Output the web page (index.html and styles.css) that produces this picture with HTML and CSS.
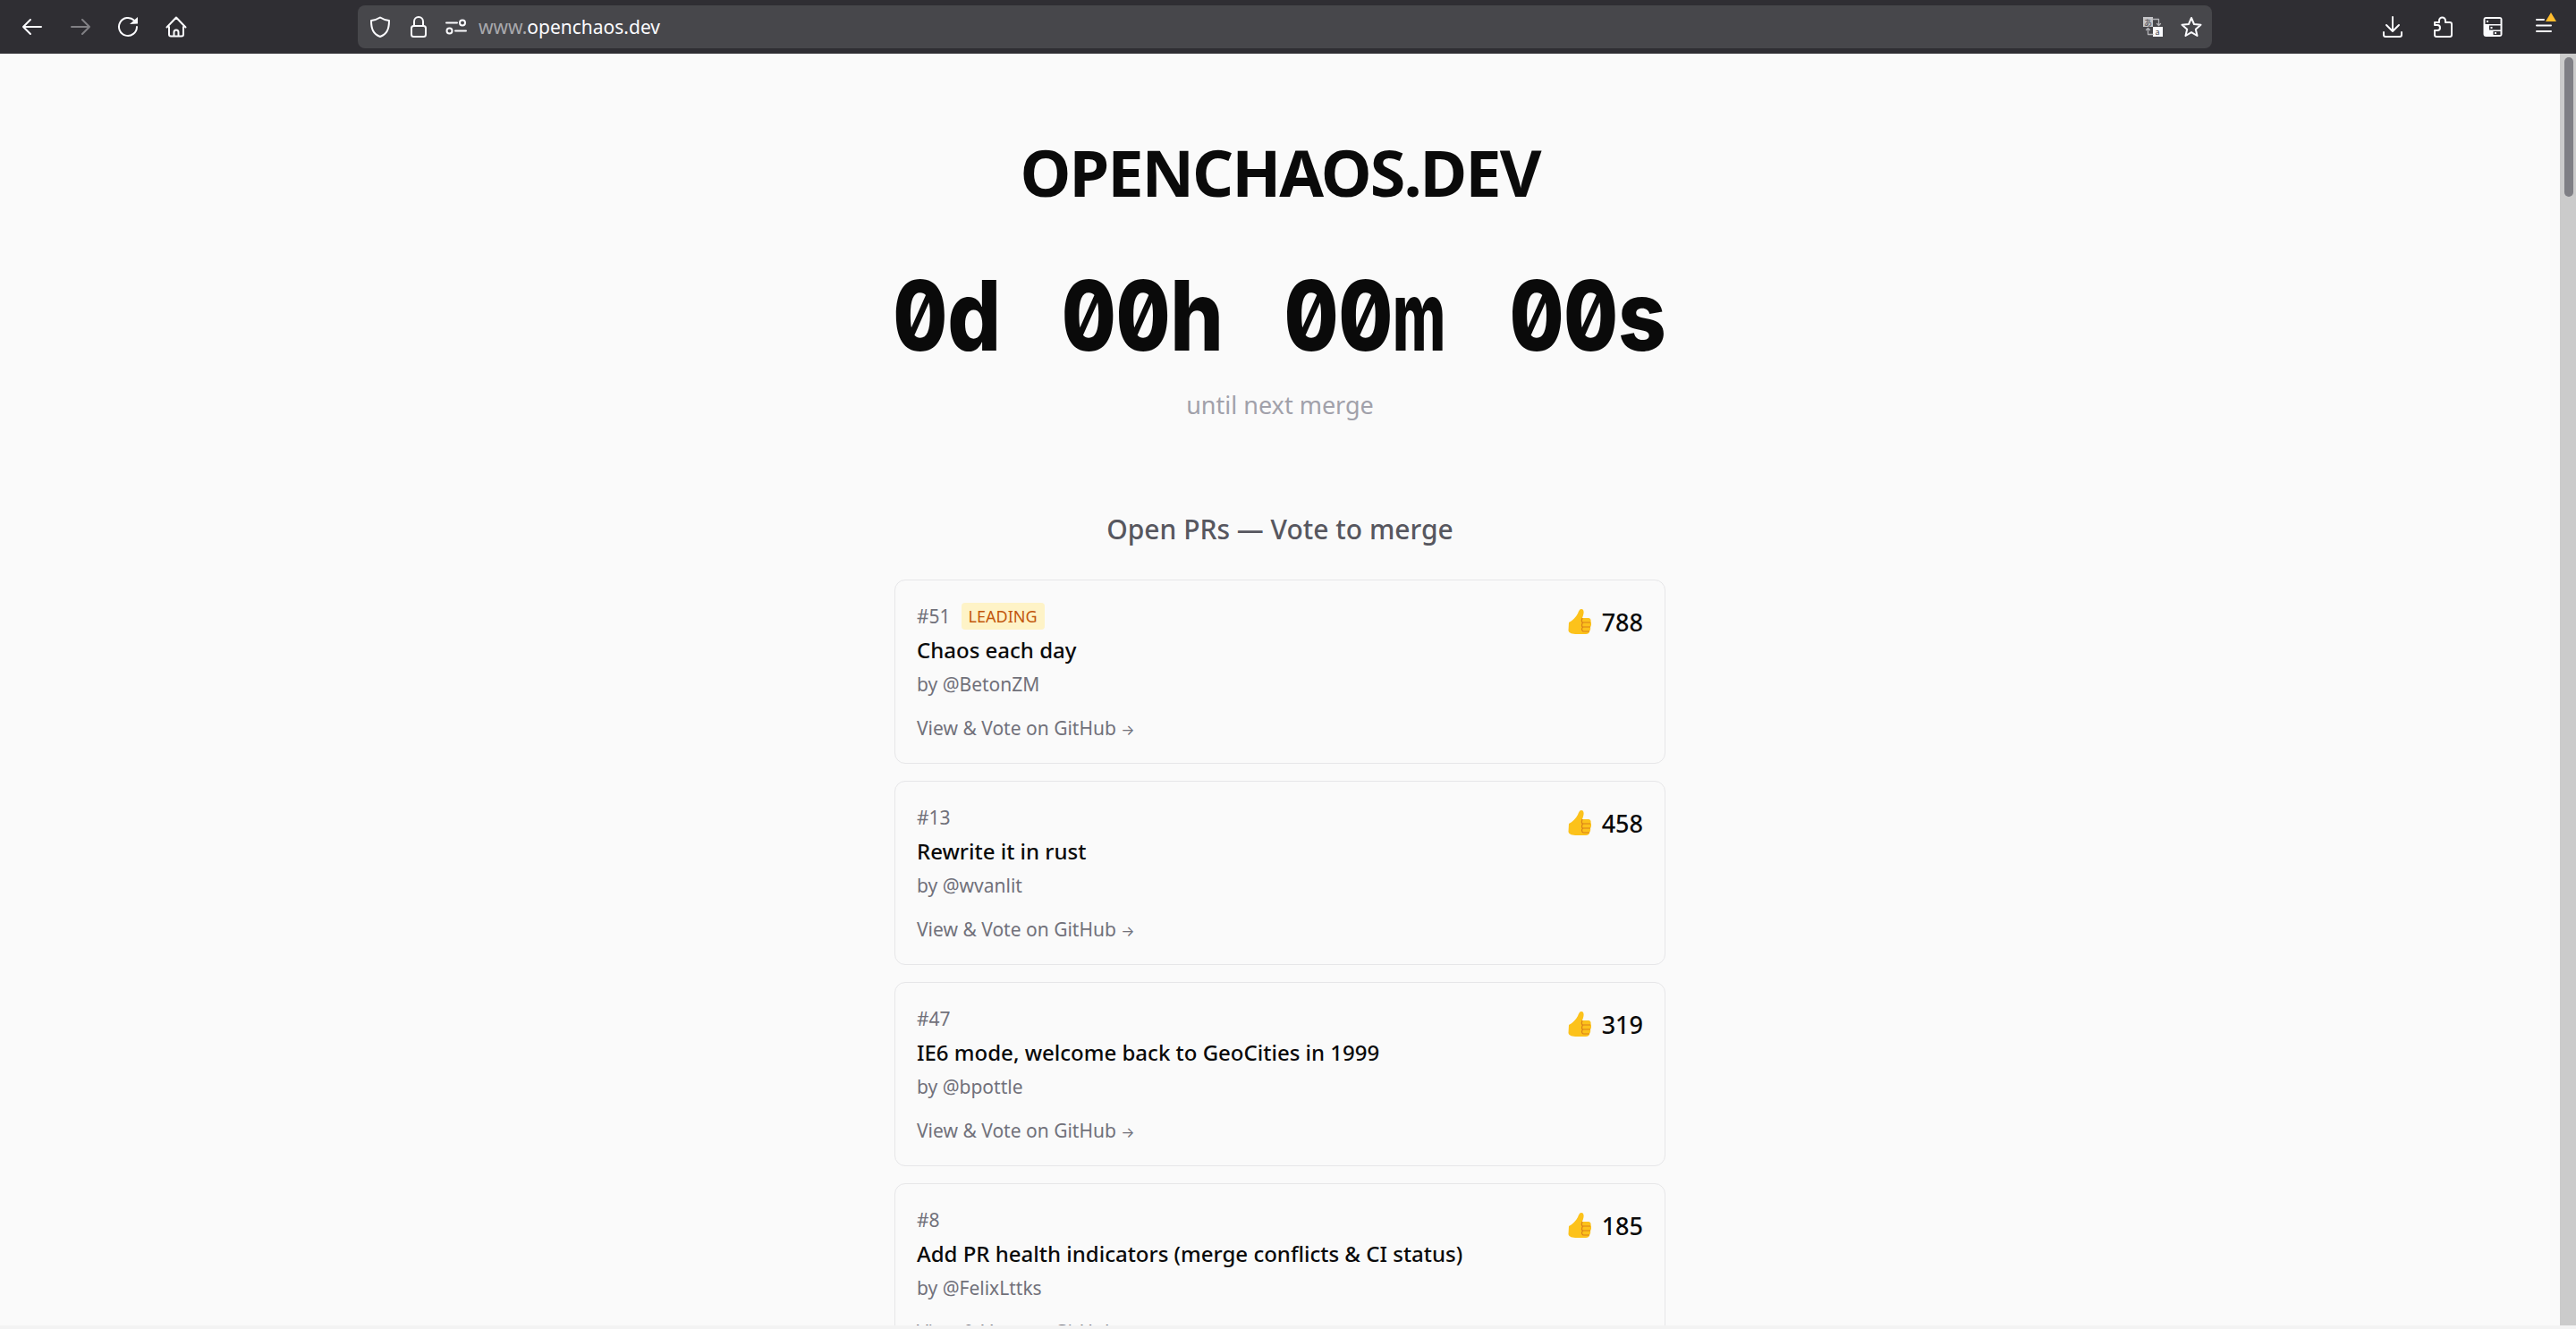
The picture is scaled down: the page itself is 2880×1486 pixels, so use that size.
FILE: index.html
```html
<!DOCTYPE html>
<html lang="en">
<head>
    <meta charset="UTF-8">
    <title>OPENCHAOS.DEV</title>
    <link rel="stylesheet" href="styles.css">
</head>
<body>
    <svg class="defs" width="0" height="0">
        <symbol id="thumb" viewBox="0 0 26 28">
            <path d="M1 15C5 13 9 9 11 5 12 2 13 0 15 0c3 0 3 4 2 7l-1 3h7c2 0 3 2 2.500 4 1 2 .5 5-.5 6 .5 2 0 4-1 5 0 2-2 3-4 3H10c-5 0-9-1-9.500-4z" fill="#fcc21b"/>
            <path d="M16 10c-1 3-1 5 1 5h8M17 15c-2 1-2 5 0 5h8M17 20c-2 1-2 4 0 5h7" fill="none" stroke="#d9801a" stroke-width="1.200"/>
        </symbol>
    </svg>

    <header class="toolbar">
        <nav class="nav-buttons">
            <svg class="icon" viewBox="0 0 24 24"><path d="M23 12H3M11 4l-8 8 8 8"/></svg>
            <svg class="icon disabled" viewBox="0 0 24 24"><path d="M3 12h20M15 4l8 8-8 8"/></svg>
            <svg class="icon" viewBox="0 0 24 24"><path d="M19 4.800A10 10 0 1 0 22 12"/><path class="solid" d="M14 9l9-.5V1z"/></svg>
            <svg class="icon" viewBox="0 0 24 24"><path d="M4 12v8.500a2 2 0 0 0 2 2h12a2 2 0 0 0 2-2V12M1.500 12.500L12 1.500l10.500 11M9.500 22.500V18a2.500 2.500 0 0 1 5 0v4.500"/></svg>
        </nav>
        <div class="urlbar">
            <svg class="icon" viewBox="0 0 24 24"><path d="M12 1.500c3 2 6 3 10 3.500 0 9-2 15-10 18C4 20 2 14 2 5c4-.5 7-1.500 10-3.500z"/></svg>
            <svg class="icon lock" viewBox="0 0 18 24"><path d="M4 11V6a5 5 0 0 1 10 0v5"/><rect x="1" y="11" width="16" height="12" rx="2.500"/></svg>
            <svg class="icon sliders" viewBox="0 0 24 16"><path d="M1 3.500h12M11 12.500h12"/><circle cx="19" cy="3.500" r="3"/><circle cx="4.500" cy="12.500" r="3"/></svg>
            <span class="url"><span class="url-dim">www.</span>openchaos.dev</span>
            <svg class="icon translate" viewBox="0 0 22 22">
                <rect class="solid dim" x="0" y="0" width="11" height="11"/>
                <rect class="solid" x="11" y="11" width="11" height="11"/>
                <path class="thin" d="M11 2.500h6.500V9M15.500 7.500l2 2 2-2M11 19.500H5.500V13M3.500 14.500l2-2 2 2"/>
                <text class="glyph" x="1" y="9.500">あ</text>
                <text class="glyph" x="13.500" y="20">a</text>
            </svg>
            <svg class="icon" viewBox="0 0 24 24"><path d="M12 2l3 7 7.500.7-5.700 5 1.700 7.300-6.500-3.900L5.500 22l1.700-7.300-5.700-5L9 9z"/></svg>
        </div>
        <div class="tools">
            <svg class="icon" viewBox="0 0 24 24"><path d="M12 1v16M5 10l7 7 7-7M2 18v3a2 2 0 0 0 2 2h16a2 2 0 0 0 2-2v-3"/></svg>
            <svg class="icon" viewBox="0 0 24 24"><path d="M3 7h5V5a3.500 3.500 0 0 1 7 0v2h5a2 2 0 0 1 2 2v12a2 2 0 0 1-2 2H5a2 2 0 0 1-2-2v-5h3a3 3 0 0 0 0-6H3z"/></svg>
            <svg class="icon" viewBox="0 0 24 24">
                <rect class="solid" x="1.500" y="1" width="21" height="22" rx="3"/>
                <path class="cut" d="M3.500 3h17v6h-17zM8 10.500h12.500v5H8zM12.500 17h8v4h-8z"/>
                <path class="solid" d="M5 5h2v2H5zM9.500 12h2v2h-2zM14 18h2v2h-2z"/>
            </svg>
            <div class="menu-button">
                <svg class="icon" viewBox="0 0 18 24"><path d="M1 4h8M1 10.500h16M1 17h16"/></svg>
                <span class="menu-badge"></span>
            </div>
        </div>
    </header>

    <div class="viewport">
        <main class="page">
            <h1 class="site-title">OPENCHAOS.DEV</h1>
            <div class="countdown">
                <span>0d</span>
                <span>00h</span>
                <span>00<span class="narrow">m</span></span>
                <span>00s</span>
            </div>
            <p class="until">until next merge</p>
            <h2 class="list-title">Open PRs — Vote to merge</h2>

            <ul class="pr-list">
                <li class="pr-card">
                    <div class="pr-body">
                        <div class="pr-meta"><span class="pr-number">#51</span><span class="badge">LEADING</span></div>
                        <div class="pr-title">Chaos each day</div>
                        <div class="pr-author">by @BetonZM</div>
                        <a class="pr-link" href="#">View &amp; Vote on GitHub <span class="arrow">→</span></a>
                    </div>
                    <div class="votes"><svg class="thumb"><use href="#thumb"/></svg>788</div>
                </li>
                <li class="pr-card">
                    <div class="pr-body">
                        <div class="pr-meta"><span class="pr-number">#13</span></div>
                        <div class="pr-title">Rewrite it in rust</div>
                        <div class="pr-author">by @wvanlit</div>
                        <a class="pr-link" href="#">View &amp; Vote on GitHub <span class="arrow">→</span></a>
                    </div>
                    <div class="votes"><svg class="thumb"><use href="#thumb"/></svg>458</div>
                </li>
                <li class="pr-card">
                    <div class="pr-body">
                        <div class="pr-meta"><span class="pr-number">#47</span></div>
                        <div class="pr-title">IE6 mode, welcome back to GeoCities in 1999</div>
                        <div class="pr-author">by @bpottle</div>
                        <a class="pr-link" href="#">View &amp; Vote on GitHub <span class="arrow">→</span></a>
                    </div>
                    <div class="votes"><svg class="thumb"><use href="#thumb"/></svg>319</div>
                </li>
                <li class="pr-card">
                    <div class="pr-body">
                        <div class="pr-meta"><span class="pr-number">#8</span></div>
                        <div class="pr-title">Add PR health indicators (merge conflicts &amp; CI status)</div>
                        <div class="pr-author">by @FelixLttks</div>
                        <a class="pr-link" href="#">View &amp; Vote on GitHub <span class="arrow">→</span></a>
                    </div>
                    <div class="votes"><svg class="thumb"><use href="#thumb"/></svg>185</div>
                </li>
            </ul>
        </main>
        <div class="scrollbar"><div class="scrollbar-thumb"></div></div>
    </div>
    <div class="bottom-edge"></div>
</body>
</html>
```

FILE: styles.css
```css
* {
    box-sizing: border-box;
}
html, body {
    height: 100%;
}
body {
    margin: 0;
    display: flex;
    flex-direction: column;
    overflow: hidden;
    font-family: "Noto Sans", sans-serif;
    background-color: #fafafa;
    color: #0a0a0a;
}
.defs {
    position: absolute;
}

/* browser chrome */
.toolbar {
    flex: none;
    height: 60px;
    display: flex;
    align-items: center;
    background-color: #2f2e33;
}
.icon {
    width: 24px;
    height: 24px;
    fill: none;
    stroke: #fbfbfe;
    stroke-width: 2;
    stroke-linejoin: round;
    stroke-linecap: round;
    flex: none;
}
.icon .solid {
    fill: #fbfbfe;
    stroke: none;
}
.icon .dim {
    fill: #c4c4c7;
}
.icon .thin {
    stroke-width: 1.300;
    stroke: #b4b4b8;
}
.icon .cut {
    fill: #2f2e33;
    stroke: none;
}
.icon .glyph {
    font-family: "Noto Sans CJK JP", "Noto Sans", sans-serif;
    font-size: 9px;
    fill: #47474b;
    stroke: none;
}
.disabled {
    opacity: 0.4;
}
.nav-buttons {
    width: 400px;
    padding-left: 23px;
    display: flex;
    gap: 30px;
}
.urlbar {
    width: 2073px;
    height: 48px;
    display: flex;
    align-items: center;
    padding: 0 11px 0 13px;
    background-color: #47474b;
    border-radius: 8px;
}
.lock {
    width: 18px;
    margin-left: 22px;
}
.sliders {
    margin-left: 21px;
}
.url {
    flex: 1;
    margin-left: 13px;
    font-size: 21px;
    color: #fbfbfe;
}
.url-dim {
    color: #a9a9ad;
}
.translate {
    width: 22px;
    height: 22px;
    margin-right: 20px;
}
.tools {
    flex: 1;
    display: flex;
    gap: 32px;
    padding-left: 190px;
}
.menu-button {
    position: relative;
    display: flex;
    margin-left: 4px;
}
.menu-button .icon {
    width: 18px;
}
.menu-badge {
    position: absolute;
    left: 11px;
    top: -4px;
    width: 0;
    height: 0;
    border-left: 6px solid transparent;
    border-right: 6px solid transparent;
    border-bottom: 10px solid #ffbd2e;
}

/* page */
.viewport {
    flex: 1;
    min-height: 0;
    display: flex;
    overflow: hidden;
}
.page {
    flex: 1;
    display: flex;
    flex-direction: column;
    align-items: center;
}
.site-title {
    margin: 84px 0 0;
    font-size: 72px;
    line-height: 96px;
    font-weight: 700;
    letter-spacing: -2px;
}
/* no slashed-zero mono font here, so Inter squeezed to the same cell width */
.countdown {
    margin-top: 53px;
    display: flex;
    gap: 78px;
    font-family: "Inter", sans-serif;
    font-feature-settings: "zero", "tnum";
    font-size: 108px;
    line-height: 120px;
    font-weight: 800;
    transform: scaleX(0.87);
}
.narrow {
    display: inline-block;
    width: 72px;
    transform: scaleX(0.68);
    transform-origin: left;
}
.until {
    margin: 20px 0 0;
    font-size: 27px;
    line-height: 40px;
    color: #a1a1aa;
}
.list-title {
    margin: 97px 0 0;
    font-size: 30px;
    line-height: 44px;
    font-weight: 500;
    color: #57575f;
}
.pr-list {
    list-style: none;
    width: 862px;
    margin: 34px 0 0;
    padding: 0;
    display: flex;
    flex-direction: column;
    gap: 19px;
}
.pr-card {
    flex: none;
    height: 206px;
    display: flex;
    justify-content: space-between;
    padding: 24px;
    border: 1px solid #e6e6e8;
    border-radius: 12px;
}
.pr-meta {
    display: flex;
    align-items: center;
    gap: 12px;
    height: 32px;
}
.pr-number {
    font-size: 21px;
    color: #71717a;
}
.badge {
    padding: 0 8px;
    font-size: 18px;
    line-height: 30px;
    color: #c2570c;
    background-color: #fef3c7;
    border-radius: 4px;
}
.pr-title {
    margin-top: 4px;
    font-size: 24px;
    line-height: 36px;
    font-weight: 500;
}
.pr-author {
    margin-top: 4px;
    font-size: 21px;
    line-height: 32px;
    color: #71717a;
}
.pr-link {
    display: block;
    margin-top: 17px;
    font-size: 21px;
    line-height: 32px;
    color: #71717a;
    text-decoration: none;
}
.arrow {
    font-family: "Inter", sans-serif;
    font-size: 16px;
}
.votes {
    display: flex;
    align-items: center;
    gap: 12px;
    height: 44px;
    font-size: 27px;
    font-weight: 500;
}
.thumb {
    width: 26px;
    height: 28px;
}
.scrollbar {
    flex: none;
    width: 18px;
    padding: 4px 3px 0 5px;
    background-color: #cbcbcb;
}
.scrollbar-thumb {
    height: 156px;
    background-color: #7f7f85;
    border-radius: 5px;
}
.bottom-edge {
    flex: none;
    height: 4px;
    background-color: #f3f3f3;
}
```
